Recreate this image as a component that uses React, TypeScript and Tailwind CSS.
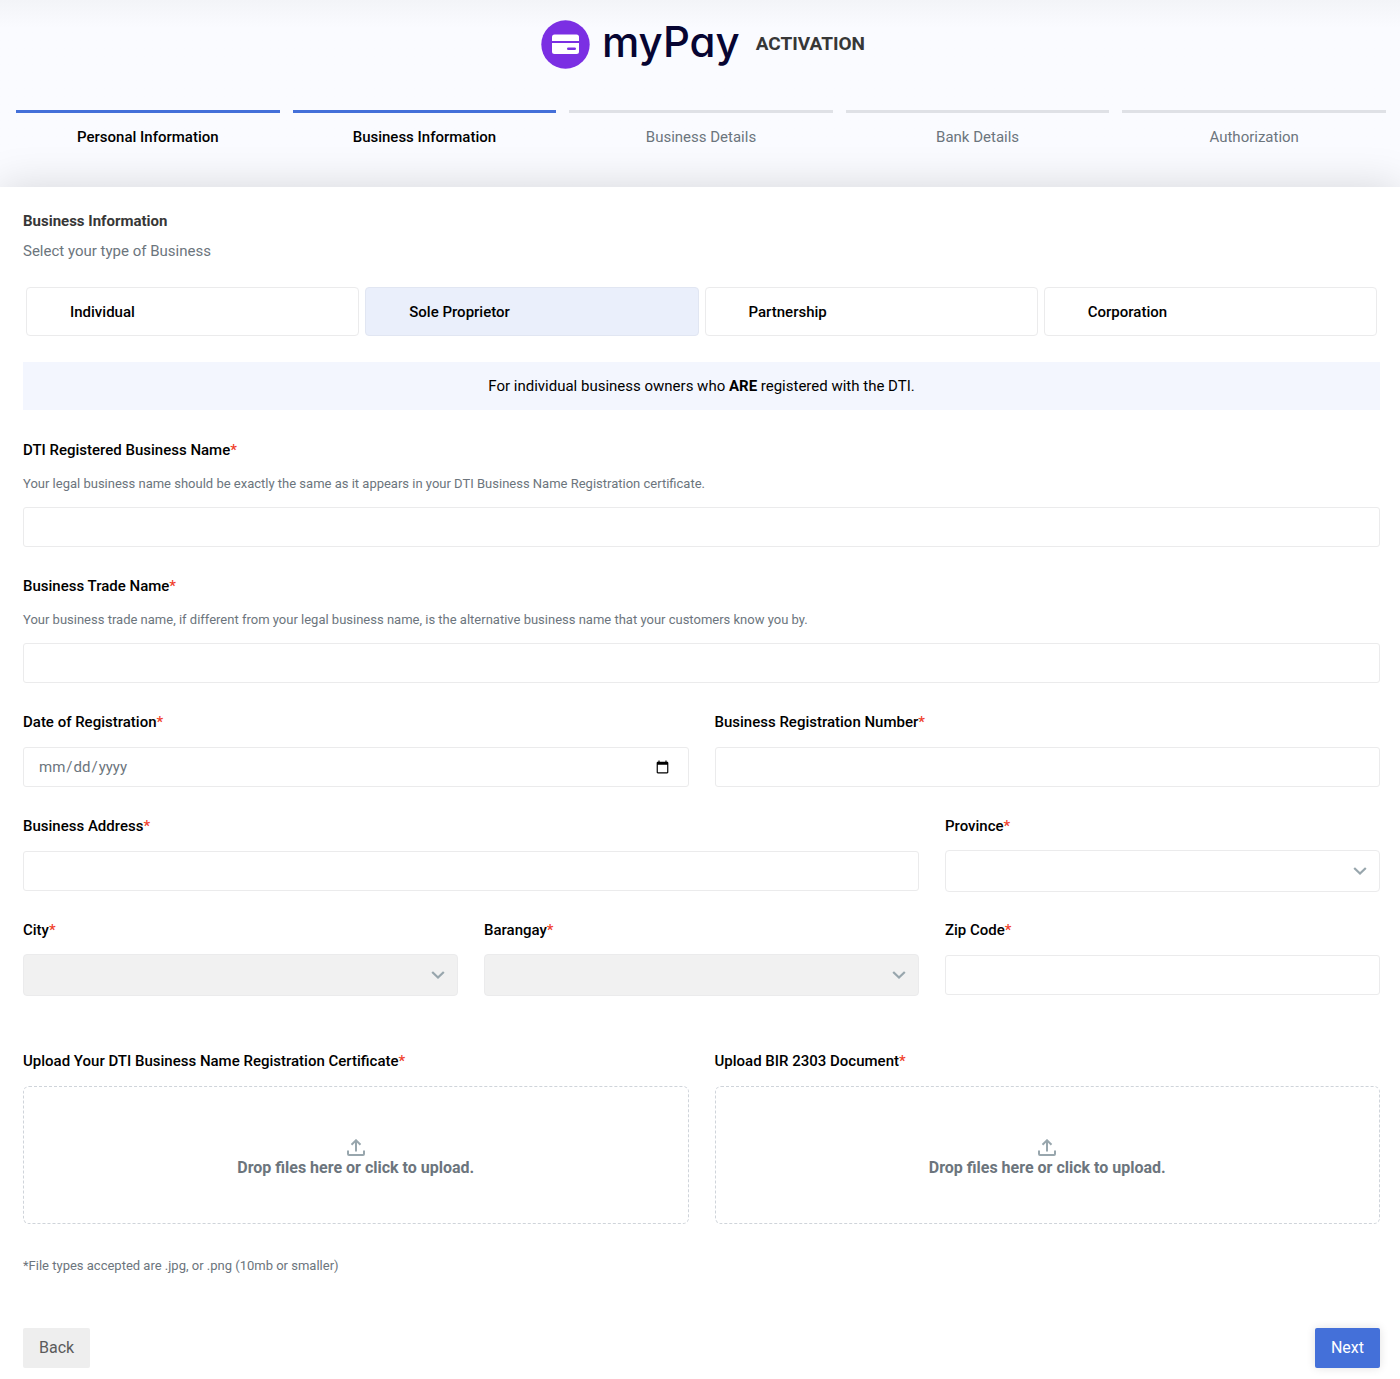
import { useState } from "react";
import type { ReactNode } from "react";

const steps = [
  { title: "Personal Information", done: true },
  { title: "Business Information", done: true },
  { title: "Business Details", done: false },
  { title: "Bank Details", done: false },
  { title: "Authorization", done: false },
];

const businessTypes = ["Individual", "Sole Proprietor", "Partnership", "Corporation"];

const inputClass =
  "block h-10 w-full rounded-[3px] border border-[#ebebec] bg-white pr-4 pl-[14px] text-[15px] text-[#6c757d] outline-none focus:border-[#4470d9]";

function Logo() {
  return (
    <div className="flex items-center gap-3">
      <svg width="49" height="49" viewBox="0 0 49 49" aria-hidden="true">
        <circle cx="24.5" cy="24.5" r="24.2" fill="#7b2fe3" />
        <path d="M13.500 14.500h22a2.500 2.500 0 0 1 2.500 2.500V21H11v-4a2.500 2.500 0 0 1 2.500-2.500z" fill="#fff" />
        <path
          fillRule="evenodd"
          d="M11 23h27v8.500a2.500 2.500 0 0 1-2.500 2.500h-22a2.500 2.500 0 0 1-2.500-2.500zM27.300 27.400a1.300 1.300 0 0 0 0 2.600h6.400a1.300 1.300 0 0 0 0-2.600z"
          fill="#fff"
        />
      </svg>
      <span className="pb-1.5 font-[Inter,sans-serif] text-[42px] leading-[42px] font-medium text-[#070532] [font-feature-settings:'cv11']">
        myPay
      </span>
    </div>
  );
}

function FieldLabel({ htmlFor, children }: { htmlFor: string; children: ReactNode }) {
  return (
    <label htmlFor={htmlFor} className="block text-[15px] leading-6 font-medium text-black">
      {children}
      <span className="text-[#f0412c]">*</span>
    </label>
  );
}

type FieldProps = {
  id: string;
  label: string;
  help?: string;
  type?: string;
  className?: string;
};

function TextField({ id, label, help, type = "text", className = "" }: FieldProps) {
  return (
    <div className={className}>
      <FieldLabel htmlFor={id}>{label}</FieldLabel>
      {help && <p className="mt-3 text-[13px] leading-5 text-[#6c757d]">{help}</p>}
      <input id={id} type={type} className={`${inputClass} mt-[13px]`} />
    </div>
  );
}

function SelectField({ id, label, disabled = false }: { id: string; label: string; disabled?: boolean }) {
  return (
    <div>
      <FieldLabel htmlFor={id}>{label}</FieldLabel>
      <div className="relative mt-3">
        <select
          id={id}
          disabled={disabled}
          className="block h-[42px] w-full appearance-none rounded border border-[#ebebec] bg-white px-4 text-[15px] outline-none disabled:bg-[#f1f1f1] disabled:opacity-100"
        />
        <svg
          className="pointer-events-none absolute top-1/2 right-[13px] -translate-y-1/2"
          width="14"
          height="8"
          viewBox="0 0 14 8"
          fill="none"
          stroke="#98a6ad"
          strokeWidth="2.200"
          aria-hidden="true"
        >
          <path d="M1.200 1 7 6.500l5.800-5.500" />
        </svg>
      </div>
    </div>
  );
}

function UploadField({ id, label }: { id: string; label: string }) {
  return (
    <div>
      <FieldLabel htmlFor={id}>{label}</FieldLabel>
      <label
        htmlFor={id}
        className="mt-[13px] flex h-[138px] cursor-pointer flex-col items-center justify-center rounded-md border border-dashed border-[#cfd4da] bg-white pt-2"
      >
        <input id={id} type="file" accept=".jpg,.png" className="sr-only" />
        <svg width="18" height="17" viewBox="0 0 18 17" fill="none" stroke="#98a6ad" strokeWidth="2" aria-hidden="true">
          <path d="M9 12.500V1.800M4.500 5.800 9 1.300l4.500 4.500M1 11.500V15a1 1 0 0 0 1 1h14a1 1 0 0 0 1-1v-3.500" />
        </svg>
        <span className="text-base leading-6 font-bold text-[#6c757d]">Drop files here or click to upload.</span>
      </label>
    </div>
  );
}

export default function App() {
  const [type, setType] = useState("Sole Proprietor");

  return (
    <div className="min-h-screen bg-white font-[Roboto,sans-serif]">
      {/* HEADER */}
      <header className="bg-[#fafbff] bg-linear-to-b from-[#f3f4f8] to-[#fafbff] to-[28px] pt-5 pb-[38px]">
        <div className="flex items-center justify-center gap-4 pl-1.5">
          <Logo />
          <h1 className="pb-0.5 text-[19px] leading-6 font-bold text-[#373737]">ACTIVATION</h1>
        </div>

        <ol className="mt-[41px] grid grid-cols-5 gap-[13px] pr-3.5 pl-4">
          {steps.map((step) => (
            <li
              key={step.title}
              className={
                step.done
                  ? "border-t-3 border-[#4470d9] pt-3 text-center text-[15px] leading-6 font-medium text-black"
                  : "border-t-3 border-[#dfe1e6] pt-3 text-center text-[15px] leading-6 text-[#6c757d]"
              }
            >
              {step.title}
            </li>
          ))}
        </ol>
      </header>

      {/* FORM */}
      <form
        className="relative bg-white pt-[22px] pr-5 pb-[11px] pl-[23px] shadow-[0_0_40px_rgba(0,0,0,0.15)]"
        onSubmit={(e) => e.preventDefault()}
      >
        <h2 className="text-[15px] leading-6 font-bold text-[#373737]">Business Information</h2>
        <p className="mt-1.5 text-[15px] leading-6 text-[#6c757d]">Select your type of Business</p>

        <div role="radiogroup" aria-label="Type of business" className="mt-6 grid grid-cols-4 gap-1.5 px-[3px]">
          {businessTypes.map((item) => (
            <label
              key={item}
              className="flex h-[49px] cursor-pointer items-center rounded border border-[#ebebec] bg-white pl-[15px] text-[15px] leading-6 font-medium text-black has-checked:border-[#e1e6f2] has-checked:bg-[#eaeffb]"
            >
              <input
                type="radio"
                name="business-type"
                checked={type === item}
                onChange={() => setType(item)}
                className="mr-3 size-4 appearance-none"
              />
              {item}
            </label>
          ))}
        </div>

        <p className="mt-[26px] bg-[#f3f6fe] py-3 text-center text-[15px] leading-6 text-black">
          For individual business owners who <b>ARE</b> registered with the DTI.
        </p>

        <div className="mt-7 grid gap-[27px]">
          <TextField
            id="dti-name"
            label="DTI Registered Business Name"
            help="Your legal business name should be exactly the same as it appears in your DTI Business Name Registration certificate."
          />
          <TextField
            id="trade-name"
            label="Business Trade Name"
            help="Your business trade name, if different from your legal business name, is the alternative business name that your customers know you by."
          />

          <div className="grid grid-cols-2 gap-[26px]">
            <TextField id="reg-date" label="Date of Registration" type="date" />
            <TextField id="reg-number" label="Business Registration Number" />
          </div>

          <div className="grid grid-cols-3 gap-[26px]">
            <TextField id="address" label="Business Address" className="col-span-2" />
            <SelectField id="province" label="Province" />
            <SelectField id="city" label="City" disabled />
            <SelectField id="barangay" label="Barangay" disabled />
            <TextField id="zip" label="Zip Code" />
          </div>
        </div>

        <div className="mt-[53px] grid grid-cols-2 gap-[26px]">
          <UploadField id="dti-file" label="Upload Your DTI Business Name Registration Certificate" />
          <UploadField id="bir-file" label="Upload BIR 2303 Document" />
        </div>

        <p className="mt-8 text-[13px] leading-5 text-[#6c757d]">*File types accepted are .jpg, or .png (10mb or smaller)</p>

        <div className="mt-[52px] flex justify-between">
          <button type="button" className="h-10 rounded-[2px] bg-[#eeeeee] px-4 text-base text-[#5b5b5b]">
            Back
          </button>
          <button
            type="submit"
            className="h-10 rounded-[2px] bg-[#4470d9] px-4 text-base text-white shadow-[0_0_10px_rgba(0,0,0,0.12)]"
          >
            Next
          </button>
        </div>
      </form>
    </div>
  );
}
